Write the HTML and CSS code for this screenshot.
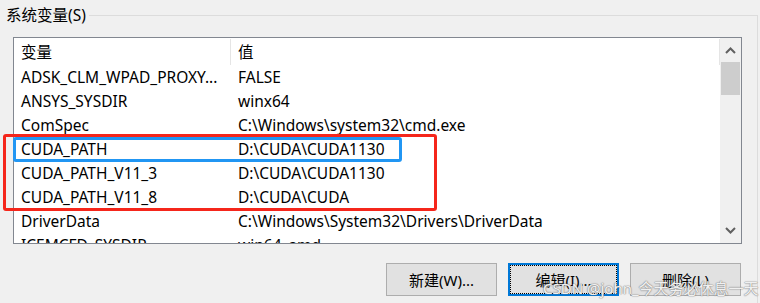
FILE: index.html
```html
<!DOCTYPE html>
<html lang="zh-CN">
<head>
    <meta charset="UTF-8">
    <title>系统变量</title>
    <link rel="stylesheet" href="styles.css">
</head>
<body>
    <!-- Grupo: variables del sistema -->
    <div class="group">
        <div class="group-head">
            <span class="group-label">系统变量(S)</span>
            <span class="group-rule"></span>
        </div>
        <div class="group-body">
            <div class="list">
                <div class="list-content">
                    <div class="list-header">
                        <div class="cell col-name">变量</div>
                        <div class="cell col-value">值</div>
                    </div>
                    <div class="row"><div class="cell col-name">ADSK_CLM_WPAD_PROXY...</div><div class="cell col-value">FALSE</div></div>
                    <div class="row"><div class="cell col-name">ANSYS_SYSDIR</div><div class="cell col-value">winx64</div></div>
                    <div class="row"><div class="cell col-name">ComSpec</div><div class="cell col-value">C:\Windows\system32\cmd.exe</div></div>
                    <div class="row"><div class="cell col-name">CUDA_PATH</div><div class="cell col-value">D:\CUDA\CUDA1130</div></div>
                    <div class="row"><div class="cell col-name">CUDA_PATH_V11_3</div><div class="cell col-value">D:\CUDA\CUDA1130</div></div>
                    <div class="row"><div class="cell col-name">CUDA_PATH_V11_8</div><div class="cell col-value">D:\CUDA\CUDA</div></div>
                    <div class="row"><div class="cell col-name">DriverData</div><div class="cell col-value">C:\Windows\System32\Drivers\DriverData</div></div>
                    <div class="row"><div class="cell col-name">ICEMCFD_SYSDIR</div><div class="cell col-value">win64_amd</div></div>
                </div>
                <div class="scrollbar">
                    <svg class="arrow" width="21" height="24" viewBox="0 0 21 24"><path d="M6 15 L10.5 10.5 L15 15" fill="none" stroke="#606060" stroke-width="2"/></svg>
                    <div class="thumb"></div>
                    <div class="track"></div>
                    <svg class="arrow" width="21" height="24" viewBox="0 0 21 24"><path d="M6 9 L10.5 13.5 L15 9" fill="none" stroke="#606060" stroke-width="2"/></svg>
                </div>
            </div>

            <div class="buttons">
                <button type="button">新建(W)...</button>
                <button type="button" class="focused">编辑(I)...</button>
                <button type="button">删除(L)</button>
            </div>
        </div>
    </div>

    <!-- Marcas de anotación -->
    <div class="mark mark-red"></div>
    <div class="mark mark-blue"></div>
    <div class="watermark">CSDN @john_今天务必休息一天</div>
</body>
</html>
```

FILE: styles.css
```css
/* General */
body {
    margin: 0;
    width: 760px;
    height: 303px;
    overflow: hidden;
    position: relative;
    background-color: #f0f0f0;
    color: #000;
    font-family: "Noto Sans", "Noto Sans CJK SC", sans-serif;
    font-size: 15.5px;
}

/* Group box */
.group {
    width: 758px;
}

.group-head {
    display: flex;
    height: 30px;
}

.group-label {
    padding: 0 3px 0 6px;
    line-height: 30px;
}

.group-rule {
    flex: 1;
    margin-top: 15px;
    border-top: 1px solid #dcdcdc;
    border-right: 1px solid #dcdcdc;
}

.group-body {
    padding: 7px 15px 0 13px;
    border-right: 1px solid #dcdcdc;
    height: 266px;
}

/* List */
.list {
    display: flex;
    height: 205px;
    border: 1px solid #828790;
    background-color: #fff;
}

.list-content {
    flex: 1;
    overflow: hidden;
}

.list-header {
    display: flex;
    height: 27px;
    align-items: center;
}

.list-header .cell {
    border-right: 1px solid #e5e5e5;
    height: 26px;
    line-height: 26px;
}

.row {
    display: flex;
    height: 24px;
    line-height: 24px;
}

.cell {
    padding-left: 7px;
    white-space: nowrap;
    overflow: hidden;
    box-sizing: border-box;
}

.col-name {
    width: 217px;
}

.col-value {
    flex: 1;
}

/* Scrollbar */
.scrollbar {
    width: 21px;
    display: flex;
    flex-direction: column;
    background-color: #f0f0f0;
}

.arrow {
    display: block;
    flex: none;
}

.thumb {
    height: 33px;
    margin: 0 1px;
    background-color: #cdcdcd;
}

.track {
    flex: 1;
}

/* Buttons */
.buttons {
    display: flex;
    justify-content: flex-end;
    gap: 11px;
    margin-top: 19px;
    padding-right: 1px;
}

button {
    width: 111px;
    height: 33px;
    padding: 0;
    border: 1px solid #adadad;
    background-color: #e1e1e1;
    color: #000;
    font-family: inherit;
    font-size: 15px;
}

button.focused {
    border: 2px solid #0078d7;
    outline: 1px dotted #000;
    outline-offset: -3px;
}

/* Annotations */
.mark {
    position: absolute;
    box-sizing: border-box;
    border-radius: 3px;
}

.mark-red {
    left: 3px;
    top: 134px;
    width: 434px;
    height: 77px;
    border: 3px solid #f5261b;
}

.mark-blue {
    left: 13px;
    top: 137px;
    width: 389px;
    height: 25px;
    border: 3px solid #2196f3;
}

.watermark {
    position: absolute;
    left: 543px;
    top: 277px;
    font-size: 15px;
    color: rgba(255, 255, 255, 0.9);
    text-shadow: 0 0 1px #8a8a8a, 0 0 1px #8a8a8a, 0 0 2px rgba(0, 0, 0, 0.3);
    white-space: nowrap;
}
```
